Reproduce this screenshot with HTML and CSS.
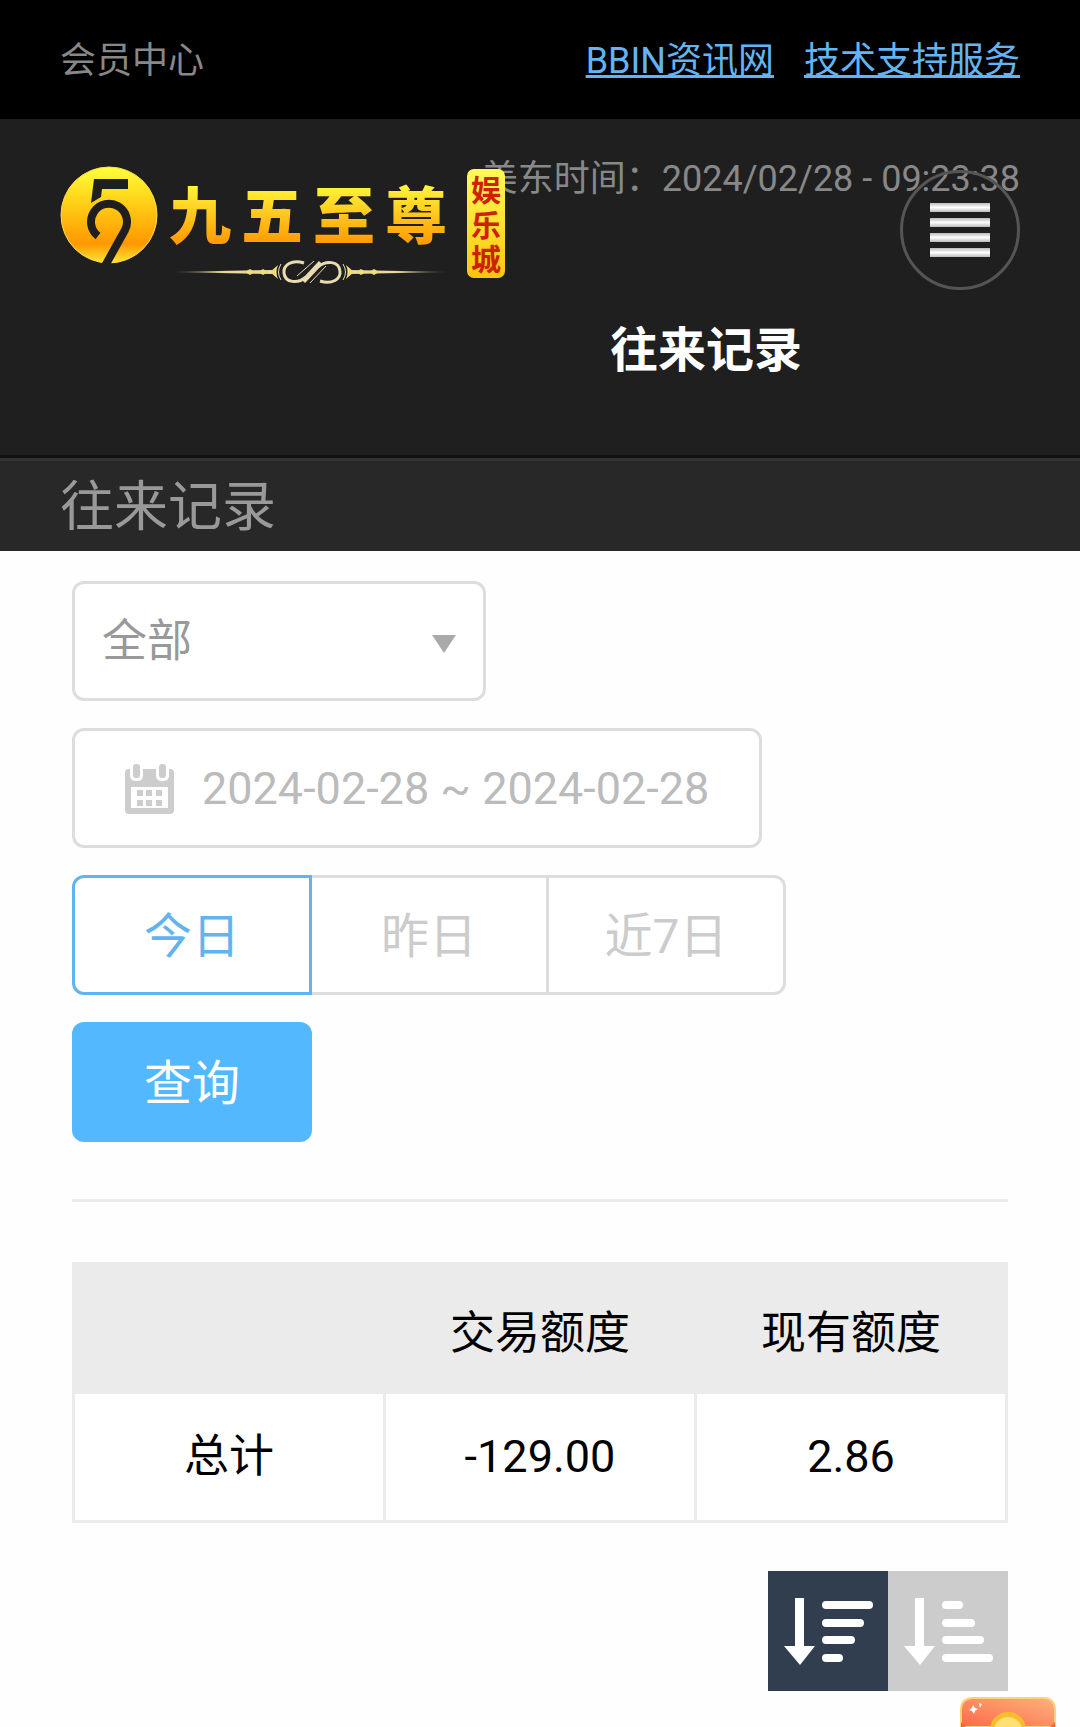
FILE: index.html
```html
<!DOCTYPE html>
<html lang="zh-CN">
<head>
    <meta charset="UTF-8">
    <meta name="viewport" content="width=device-width, initial-scale=1.0">
    <title>往来记录</title>
    <link rel="stylesheet" href="styles.css">
</head>
<body>
    <div class="top-bar">
        <span>会员中心</span>
        <nav class="top-links">
            <a href="#">BBIN资讯网</a>
            <a href="#">技术支持服务</a>
        </nav>
    </div>

    <header class="header">
        <p class="clock">美东时间：2024/02/28 - 09:23:38</p>
        <a class="logo" href="#" aria-label="九五至尊娱乐城">
            <svg viewBox="60 166 448 120" width="448" height="120">
                <defs>
                    <linearGradient id="gold" x1="0" y1="0" x2="0" y2="1">
                        <stop offset="0" stop-color="#ffff3c"/>
                        <stop offset="0.3" stop-color="#ffd91c"/>
                        <stop offset="0.8" stop-color="#ff9800"/>
                        <stop offset="1" stop-color="#ffe838"/>
                    </linearGradient>
                    <linearGradient id="goldText" gradientUnits="userSpaceOnUse" x1="0" y1="184" x2="0" y2="246">
                        <stop offset="0" stop-color="#fff83a"/>
                        <stop offset="1" stop-color="#ff9600"/>
                    </linearGradient>
                    <linearGradient id="goldBadge" x1="0" y1="0" x2="0" y2="1">
                        <stop offset="0" stop-color="#fffb55"/>
                        <stop offset="1" stop-color="#fbc60c"/>
                    </linearGradient>
                    <linearGradient id="goldLine" gradientUnits="userSpaceOnUse" x1="168" y1="0" x2="452" y2="0">
                        <stop offset="0" stop-color="#e8d9a0" stop-opacity="0"/>
                        <stop offset="0.2" stop-color="#e8d9a0"/>
                        <stop offset="0.8" stop-color="#e8d9a0"/>
                        <stop offset="1" stop-color="#e8d9a0" stop-opacity="0"/>
                    </linearGradient>
                </defs>
                <circle cx="109" cy="215" r="48" fill="url(#gold)" stroke="#ffdc4a" stroke-width="1"/>
                <path d="M94 179h34v10h-26l-1 8-10 6z" fill="#1f1f1f"/>
                <path d="M98 236A18 18 0 1 1 125 230L105 266" fill="none" stroke="#1f1f1f" stroke-width="8"/>
                <text class="logo-name" x="169 241 313 385" y="239" fill="url(#goldText)">九五至尊</text>
                <path d="M168 272L272 270V274zM452 272L350 270V274z" fill="url(#goldLine)"/>
                <path d="M250 269l5 3-5 3-5-3zM263 269l5 3-5 3-5-3zM374 269l5 3-5 3-5-3zM361 269l5 3-5 3-5-3z" fill="#f0dc78"/>
                <path d="M270 272l8-7q-3 7 0 14zM354 272l-8-7q3 7 0 14z" fill="#f0dc78"/>
                <path d="M281 264q-5 8 0 16M343 264q5 8 0 16" fill="none" stroke="#e8dcb0" stroke-width="1"/>
                <path d="M304 263C292 259 283 265 284 273C285 283 298 284 306 277L320 262M320 281C332 285 341 279 340 271C339 261 326 260 318 267L304 282" fill="none" stroke="#e8dcb0" stroke-width="3"/>
                <path d="M297 276L314 261M310 283L326 266" fill="none" stroke="#e8dcb0" stroke-width="1"/>
                <rect x="467" y="169" width="38" height="109" rx="7" fill="url(#goldBadge)"/>
                <text class="logo-badge" text-anchor="middle" fill="#cc2200">
                    <tspan x="486" y="201">娱</tspan><tspan x="486" y="236">乐</tspan><tspan x="486" y="270">城</tspan>
                </text>
            </svg>
        </a>
        <button class="menu-button" type="button" aria-label="菜单">
            <span class="menu-line"></span>
            <span class="menu-line"></span>
            <span class="menu-line"></span>
            <span class="menu-line"></span>
        </button>
        <h1 class="page-title">往来记录</h1>
    </header>

    <div class="sub-bar"><h2>往来记录</h2></div>

    <main class="content">
        <form class="filters">
            <div class="select-box">
                <select aria-label="类型">
                    <option>全部</option>
                </select>
            </div>

            <label class="date-box">
                <svg viewBox="0 0 51 51" width="51" height="51" aria-hidden="true">
                    <path d="M5 6h41a4 4 0 0 1 4 4v37a4 4 0 0 1-4 4H5a4 4 0 0 1-4-4V10a4 4 0 0 1 4-4z" fill="#cdcdcd"/>
                    <path d="M7 24h37v21H7z" fill="#fff"/>
                    <rect x="6" y="-4" width="13" height="22" rx="5" fill="#fff"/>
                    <rect x="32" y="-4" width="13" height="22" rx="5" fill="#fff"/>
                    <rect x="9" y="1" width="7" height="14" rx="3" fill="#cdcdcd"/>
                    <rect x="35" y="1" width="7" height="14" rx="3" fill="#cdcdcd"/>
                    <path d="M13 27h6v6h-6zM22 27h6v6h-6zM32 27h6v6h-6zM13 37h6v6h-6zM22 37h6v6h-6zM32 37h6v6h-6z" fill="#cdcdcd"/>
                </svg>
                <input type="text" value="2024-02-28 ~ 2024-02-28" aria-label="日期" readonly>
            </label>

            <div class="day-tabs">
                <button class="day-tab active" type="button">今日</button>
                <button class="day-tab" type="button">昨日</button>
                <button class="day-tab" type="button">近7日</button>
            </div>

            <button class="search-button" type="submit">查询</button>
        </form>

        <hr class="divider">

        <table class="summary">
            <thead>
                <tr>
                    <th></th>
                    <th>交易额度</th>
                    <th>现有额度</th>
                </tr>
            </thead>
            <tbody>
                <tr>
                    <td>总计</td>
                    <td>-129.00</td>
                    <td>2.86</td>
                </tr>
            </tbody>
        </table>

        <div class="sort-buttons">
            <button class="sort-button active" type="button" aria-label="降序">
                <svg viewBox="0 0 120 120" width="120" height="120">
                    <path d="M27 27h9v48h11L32 94 16 75h11z"/>
                    <path d="M58 34h43M58 52h34M58 69h25M58 87h13"/>
                </svg>
            </button>
            <button class="sort-button" type="button" aria-label="升序">
                <svg viewBox="0 0 120 120" width="120" height="120">
                    <path d="M27 27h9v48h11L32 94 16 75h11z"/>
                    <path d="M58 34h13M58 52h25M58 69h34M58 87h43"/>
                </svg>
            </button>
        </div>
    </main>

    <!-- floating red packet, only its top shows above the fold -->
    <a class="red-packet" href="#" aria-label="红包">
        <svg viewBox="0 0 96 30" width="96" height="30">
            <defs>
                <linearGradient id="packet" x1="0" y1="1" x2="1" y2="0">
                    <stop offset="0" stop-color="#ff6a48"/>
                    <stop offset="1" stop-color="#fbb27c"/>
                </linearGradient>
            </defs>
            <path d="M1 30V12Q1 2 12 1H84Q94 1 95 12V30z" fill="url(#packet)" stroke="#ffd27a" stroke-width="2"/>
            <path d="M1 25q2 2 5 5H1zM95 25q-2 2-5 5h5z" fill="#f26a30"/>
            <circle cx="48" cy="33" r="18" fill="#f3bf2e"/>
            <circle cx="48" cy="34" r="14" fill="#ffe070"/>
            <path d="M13 8l2 3 3 1-3 2-1 3-2-3-3-1 3-2zM19 6l3 1-2 4z" fill="#fff"/>
        </svg>
    </a>
</body>
</html>
```
FILE: styles.css
```css
* {
    box-sizing: border-box;
}
body {
    margin: 0;
    min-height: 100vh;
    background-color: #fefefe;
    color: #000;
    font-family: Roboto, "Noto Sans CJK SC", sans-serif;
    font-size: 45px;
}
button, input, select {
    font-family: inherit;
    margin: 0;
}
button {
    padding: 0;
    border: none;
    cursor: pointer;
}
svg {
    display: block;
}
.top-bar {
    display: flex;
    justify-content: space-between;
    align-items: center;
    height: 119px;
    padding: 0 60px 6px;
    background-color: #000;
    color: #888;
    font-size: 36px;
}
.top-links {
    display: flex;
    gap: 30px;
}
.top-links a {
    color: #63b4f2;
}
.header {
    position: relative;
    height: 336px;
    padding: 33px 60px 0;
    background-color: #1f1f1f;
}
.clock {
    margin: 0;
    color: #888;
    font-size: 36px;
    line-height: 54px;
    text-align: right;
}
/* logo and menu sit on top of the clock line */
.logo {
    position: absolute;
    top: 47px;
    left: 60px;
}
.logo-name {
    font-family: "Noto Sans CJK SC", sans-serif;
    font-size: 62px;
    font-weight: 900;
}
.logo-badge {
    font-family: "Noto Sans CJK SC", sans-serif;
    font-size: 30px;
    font-weight: bold;
}
.menu-button {
    position: absolute;
    top: 51px;
    right: 60px;
    display: flex;
    flex-direction: column;
    justify-content: center;
    align-items: center;
    gap: 6px;
    width: 120px;
    height: 120px;
    border: 3px solid #555;
    border-radius: 50%;
    background: none;
}
.menu-line {
    width: 60px;
    height: 9px;
    background: linear-gradient(#bbb, #fff 50%, #bbb);
}
.page-title {
    margin: 109px 0 0 332px;
    color: #fff;
    font-size: 48px;
    font-weight: bold;
    line-height: 72px;
    text-align: center;
}
.sub-bar {
    height: 96px;
    padding: 3px 60px 0;
    border-top: 3px solid #111;
    background-color: #282828;
    box-shadow: inset 0 3px #333;
}
.sub-bar h2 {
    margin: 0;
    color: #999;
    font-size: 54px;
    font-weight: normal;
    line-height: 93px;
}
.content {
    padding: 30px 72px 36px;
}
.filters {
    display: flex;
    flex-direction: column;
    align-items: flex-start;
    gap: 27px;
}
.select-box {
    position: relative;
    width: 414px;
}
.select-box select {
    appearance: none;
    width: 100%;
    height: 120px;
    padding: 0 27px;
    border: 3px solid #ddd;
    border-radius: 12px;
    background-color: #fff;
    color: #999;
    font-size: 45px;
}
.select-box::after {
    content: "";
    position: absolute;
    top: 54px;
    right: 30px;
    border: 12px solid transparent;
    border-top: 18px solid #aaa;
    border-bottom: none;
    pointer-events: none;
}
.date-box {
    display: flex;
    align-items: center;
    gap: 27px;
    width: 690px;
    height: 120px;
    padding: 0 49px;
    border: 3px solid #ddd;
    border-radius: 12px;
    background-color: #fff;
}
.date-box svg {
    flex: none;
}
.date-box input {
    flex: 1;
    min-width: 0;
    padding: 0;
    border: none;
    background: none;
    color: #bbb;
    font-size: 45px;
}
.day-tabs {
    display: flex;
}
.day-tab {
    width: 237px;
    height: 120px;
    padding-bottom: 6px;
    border: 3px solid #ddd;
    border-left: none;
    background-color: #fff;
    color: #ccc;
    font-size: 48px;
}
.day-tab.active {
    width: 240px;
    border: 3px solid #63b4ee;
    border-radius: 12px 0 0 12px;
    color: #63b4ee;
}
.day-tab:last-child {
    border-radius: 0 12px 12px 0;
}
.search-button {
    width: 240px;
    height: 120px;
    padding-bottom: 6px;
    border-radius: 12px;
    background-color: #54b8ff;
    color: #fff;
    font-size: 48px;
}
.divider {
    height: 3px;
    margin: 57px 0 60px;
    border: none;
    background-color: #ebebeb;
}
.summary {
    width: 100%;
    border-collapse: collapse;
    table-layout: fixed;
    line-height: 66px;
    text-align: center;
}
.summary th,
.summary td {
    padding: 30px 0;
    border: 3px solid #ebebeb;
    background-color: #fff;
}
.summary th {
    padding: 36px 0 24px;
    background-color: #ebebeb;
    font-weight: normal;
}
.sort-buttons {
    display: flex;
    justify-content: flex-end;
    margin-top: 48px;
}
.sort-button {
    width: 120px;
    height: 120px;
    background-color: #ccc;
}
.sort-button.active {
    background-color: #303e50;
}
.sort-button path {
    fill: #fff;
}
.sort-button path + path {
    stroke: #fff;
    stroke-width: 8px;
    stroke-linecap: round;
}
.red-packet {
    position: fixed;
    right: 24px;
    bottom: 0;
}
```
